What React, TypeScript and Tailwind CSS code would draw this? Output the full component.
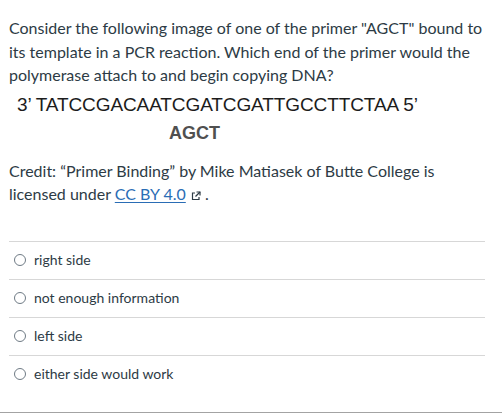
import React from "react";

function ExtIcon() {
  return (
    <svg width="10" height="10" viewBox="0 0 10 10" className="inline-block ml-[5px] align-[-1px]" fill="none" stroke="#2d3b45" strokeWidth="1.2">
      <path d="M4 2H1.5v6.5H8V6" />
      <path d="M5.5 1h3.5v3.5" />
      <path d="M9 1L4.5 5.5" />
    </svg>
  );
}

function Option({ label, last }: { label: string; last?: boolean }) {
  return (
    <div className={"border-t border-[#d7d7d7] " + (last ? "h-[57px]" : "h-[38px]")}>
      <div className="h-[35px] flex items-center pl-[5px]">
        <span className="w-[12px] h-[12px] rounded-full border border-[#6f7b85] bg-white shrink-0" />
        <span className="ml-[8px] text-[14px] text-[#2d3b45]">{label}</span>
      </div>
    </div>
  );
}

export default function App() {
  return (
    <div className="w-[503px] h-[419px] bg-white font-['Lato',sans-serif] text-[#2d3b45] overflow-hidden">
      <div className="h-[241px] pl-[9px] pr-[14px] pt-[16px]">
        <p className="text-[16px] leading-[23.5px]">
          Consider the following image of one of the primer "AGCT" bound to its template in a PCR reaction. Which end of the primer would the polymerase attach to and begin copying DNA?
        </p>
        <div className="mt-[4px] font-['Liberation_Sans',Arial,sans-serif]">
          <div className="text-[19px] leading-[28px] text-[#1c1c1c] pl-[8px] tracking-[-0.1px]">3’ TATCCGACAATCGATCGATTGCCTTCTAA 5’</div>
          <div className="text-[18px] leading-[28px] font-bold text-[#505050] pl-[160px]">AGCT</div>
        </div>
        <p className="mt-[12px] text-[16px] leading-[23.5px]">
          Credit: “Primer Binding” by Mike Matiasek of Butte College is licensed under{" "}
          <a className="text-[#2a6db5] underline underline-offset-[2px]">CC BY 4.0</a>
          <ExtIcon /> .
        </p>
      </div>
      <div className="ml-[9px] w-[476px]">
        <Option label="right side" />
        <Option label="not enough information" />
        <Option label="left side" />
        <Option label="either side would work" last />
      </div>
      <div className="h-[1px] w-[502px] bg-[#a3a3a3]" />
    </div>
  );
}
